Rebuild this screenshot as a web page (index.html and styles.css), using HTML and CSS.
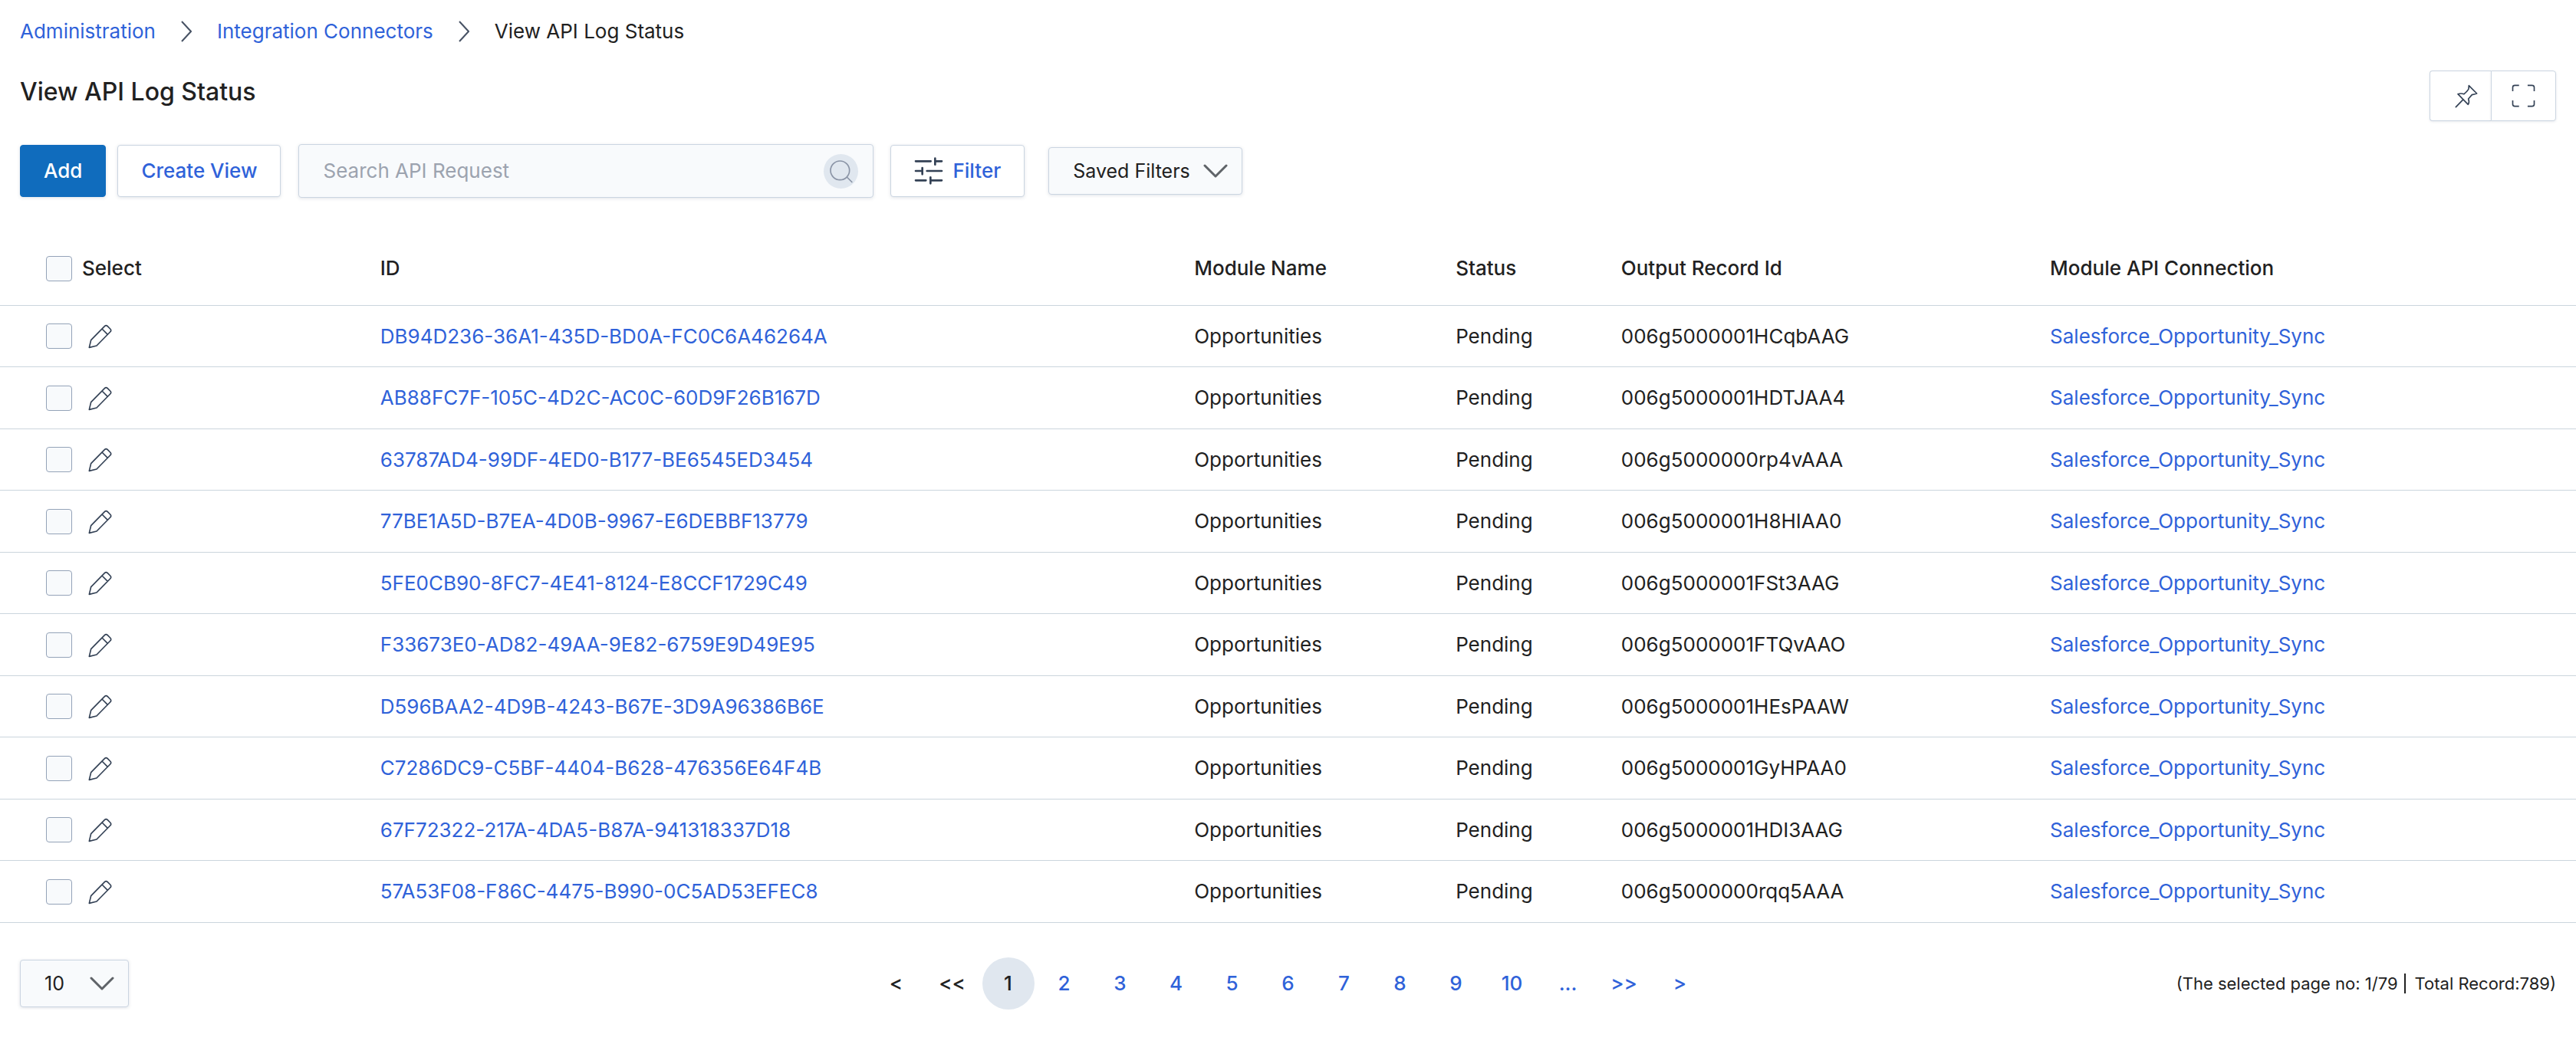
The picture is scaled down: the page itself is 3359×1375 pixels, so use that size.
FILE: index.html
```html
<!DOCTYPE html>
<html lang="en">
<head>
<meta charset="utf-8">
<title>View API Log Status</title>
<link rel="stylesheet" href="styles.css">
</head>
<body>
<svg class="sprite" aria-hidden="true">
  <symbol id="chevron-right" viewBox="0 0 14 28"><path d="M1 1L13 14L1 27" fill="none" stroke="#475264" stroke-width="2"/></symbol>
  <symbol id="chevron-down" viewBox="0 0 32 18"><path d="M2 2L16 16L30 2" fill="none" stroke="#5f6368" stroke-width="3" stroke-linecap="round" stroke-linejoin="round"/></symbol>
  <symbol id="pencil" viewBox="222 34 99 99"><path d="M229 128L236 99L289 45Q295 39 301 45L311 55Q317 61 311 67L258 121ZM279 55L301 77" fill="none" stroke="#334155" stroke-width="5" stroke-linejoin="round"/></symbol>
</svg>

<nav class="breadcrumb" aria-label="Breadcrumb">
  <a href="#">Administration</a>
  <svg class="crumb-sep"><use href="#chevron-right"/></svg>
  <a href="#">Integration Connectors</a>
  <svg class="crumb-sep"><use href="#chevron-right"/></svg>
  <span>View API Log Status</span>
</nav>

<header class="page-head">
  <h1>View API Log Status</h1>
  <div class="head-actions">
    <button type="button" class="pin" aria-label="Pin">
      <svg viewBox="240 113 90 93" width="30" height="31"><path d="M244 202L271 174M252 151Q264 147 276 151Q290 139 294 131L295 118L326 149Q314 152 307 154L293 170Q298 182 292 192Z" fill="none" stroke="#334155" stroke-width="5" stroke-linejoin="round" stroke-linecap="round"/></svg>
    </button>
    <button type="button" aria-label="Full screen">
      <svg viewBox="466 120 93 91" width="31" height="30"><path d="M470 147V132Q470 124 478 124H495M529 124H547Q555 124 555 132V147M555 184V199Q555 207 547 207H529M495 207H478Q470 207 470 199V184" fill="none" stroke="#334155" stroke-width="5"/></svg>
    </button>
  </div>
</header>

<div class="toolbar">
  <button type="button" class="btn btn-primary">Add</button>
  <button type="button" class="btn">Create View</button>
  <form class="search">
    <input type="search" placeholder="Search API Request" aria-label="Search API Request">
    <button type="submit" aria-label="Search">
      <svg viewBox="42 62 135 135" width="45" height="45"><path d="M133 152L154 173M143 126A37 37 0 1 1 69 126A37 37 0 1 1 143 126" fill="none" stroke="#8a94a6" stroke-width="5"/></svg>
    </button>
  </form>
  <button type="button" class="btn btn-filter">
    <svg viewBox="393 72 114 114" width="38" height="38"><path d="M399 91H458M475 91H501M475 80V104M399 129H425M425 117V142M443 129H501M399 166H439M457 166H501M457 154V178" fill="none" stroke="#334155" stroke-width="8" stroke-linecap="round"/></svg>
    Filter
  </button>
  <div class="dropdown saved">
    <select aria-label="Saved Filters"><option>Saved Filters</option></select>
    <svg><use href="#chevron-down"/></svg>
  </div>
</div>

<table class="log">
  <colgroup><col class="c-select"><col class="c-id"><col class="c-module"><col class="c-status"><col class="c-record"><col></colgroup>
  <thead>
    <tr>
      <th scope="col"><label class="pick"><input type="checkbox">Select</label></th>
      <th scope="col">ID</th><th scope="col">Module Name</th><th scope="col">Status</th><th scope="col">Output Record Id</th><th scope="col">Module API Connection</th>
    </tr>
  </thead>
  <tbody id="rows"></tbody>
</table>

<footer class="pager">
  <div class="dropdown size">
    <select aria-label="Records per page"><option>10</option></select>
    <svg><use href="#chevron-down"/></svg>
  </div>
  <nav class="pages" aria-label="Pages">
    <span>&lt;</span><span>&lt;&lt;</span><span class="current" aria-current="page">1</span>
    <a href="#">2</a><a href="#">3</a><a href="#">4</a><a href="#">5</a><a href="#">6</a><a href="#">7</a><a href="#">8</a><a href="#">9</a><a href="#">10</a><a href="#">...</a><a href="#">&gt;&gt;</a><a href="#">&gt;</a>
  </nav>
  <p class="summary"><span>(The selected page no: 1/79</span><span class="total">Total Record:789)</span></p>
</footer>
<script src="rows.js"></script>
</body>
</html>
```
FILE: styles.css
```css
* { box-sizing: border-box; }

body {
  margin: 0;
  font: 400 26px/32px Inter, "Liberation Sans", sans-serif;
  color: #212121;
  background: #fff;
}

a { color: #2f62d9; text-decoration: none; }

svg { display: block; flex: none; }

.sprite { position: absolute; width: 0; height: 0; }

button, input, select { font: inherit; color: inherit; margin: 0; }

.breadcrumb {
  display: flex;
  align-items: center;
  gap: 33px;
  padding: 25px 26px 0;
}

.crumb-sep { width: 14px; height: 28px; }

.page-head {
  display: flex;
  justify-content: space-between;
  align-items: flex-start;
  padding: 35px 26px 0;
}

h1 {
  margin: 0;
  padding-top: 8px;
  font-size: 32px;
  font-weight: 500;
  line-height: 40px;
}

.head-actions { display: flex; }

.head-actions button {
  display: flex;
  align-items: center;
  justify-content: center;
  width: 85px;
  height: 66px;
  padding: 0;
  border: 1px solid #cbd5e1;
  border-radius: 0 4px 4px 0;
  background: #fff;
  box-shadow: 0 1px 3px rgba(100, 116, 139, .15);
}

.head-actions .pin {
  width: 80px;
  padding-left: 14px;
  border-right: 0;
  border-radius: 4px 0 0 4px;
}

.toolbar {
  display: flex;
  align-items: center;
  padding: 30px 26px 0;
}

.btn {
  display: flex;
  align-items: center;
  justify-content: center;
  height: 68px;
  margin-right: 15px;
  padding: 0 30px;
  border: 1px solid #cbd5e1;
  border-radius: 4px;
  background: #fff;
  color: #2f62d9;
  font-weight: 500;
  box-shadow: 0 1px 4px rgba(100, 116, 139, .2);
}

.btn-primary {
  border-color: #106cbd;
  background: #106cbd;
  color: #fff;
}

.search {
  display: flex;
  align-items: center;
  justify-content: space-between;
  width: 750px;
  height: 70px;
  margin: 0 22px 0 8px;
  padding: 0 19px 0 31px;
  border: 1px solid #cbd5e1;
  border-radius: 4px;
  background: #f8fafc;
  box-shadow: 0 1px 4px rgba(100, 116, 139, .2);
}

.search input {
  flex: 1;
  padding: 0;
  border: 0;
  outline: 0;
  background: none;
}

.search input::placeholder { color: #9ca3af; }

.search button {
  padding: 0;
  border: 0;
  border-radius: 50%;
  background: #e0e7ef;
}

.btn-filter { gap: 12px; margin-right: 31px; }

.dropdown {
  display: grid;
  align-items: center;
  height: 62px;
}

.dropdown select, .dropdown svg { grid-area: 1 / 1; }

.dropdown select {
  width: 100%;
  height: 62px;
  appearance: none;
  padding: 0 31px;
  border: 1px solid #cbd5e1;
  border-radius: 4px;
  background: #f8fafc;
  box-shadow: 0 1px 4px rgba(100, 116, 139, .2);
}

.dropdown svg {
  justify-self: end;
  width: 32px;
  height: 18px;
  margin-right: 19px;
  pointer-events: none;
}

.saved { width: 253px; }
.saved select { font-size: 25px; }
.size { width: 142px; }
.size select { font-size: 25px; }

.log {
  width: 100%;
  margin-top: 44px;
  border-collapse: separate;
  border-spacing: 0;
  table-layout: fixed;
}

.c-select { width: 14.76%; }
.c-id { width: 31.6%; }
.c-module { width: 10.15%; }
.c-status { width: 6.42%; }
.c-record { width: 16.65%; }

.log th, .log td {
  padding: 0;
  border-bottom: 1px solid #cbd5dd;
  text-align: left;
  vertical-align: middle;
  white-space: nowrap;
}

.log th { height: 97px; font-weight: 500; }
.log td { height: 80px; }
.log tbody tr:nth-child(even) td { height: 81px; }

.pick {
  display: flex;
  align-items: center;
  gap: 13px;
  padding-left: 60px;
}

.log td .pick { gap: 20px; }

.pick input {
  appearance: none;
  width: 34px;
  height: 33px;
  border: 1px solid #94a3b8;
  border-radius: 4px;
  background: #f8fafc;
}

.edit { padding: 0; border: 0; background: none; }
.edit svg { width: 33px; height: 33px; }

.pager {
  display: grid;
  grid-template-columns: 1fr auto 1fr;
  align-items: center;
  padding: 45px 26px 0;
}

.pages { display: flex; gap: 5px; }

.pages a, .pages span {
  width: 68px;
  height: 68px;
  border-radius: 50%;
  line-height: 68px;
  text-align: center;
  font-weight: 500;
}

.pages .current { background: #e0e7ef; }

.summary {
  display: flex;
  align-items: center;
  justify-content: flex-end;
  margin: 0;
  font-size: 22px;
}

.total {
  margin-left: 8px;
  padding-left: 12px;
  border-left: 2px solid #212121;
  line-height: 26px;
}
```
FILE: rows.js
```js
const records = [
  ["DB94D236-36A1-435D-BD0A-FC0C6A46264A", "006g5000001HCqbAAG"],
  ["AB88FC7F-105C-4D2C-AC0C-60D9F26B167D", "006g5000001HDTJAA4"],
  ["63787AD4-99DF-4ED0-B177-BE6545ED3454", "006g5000000rp4vAAA"],
  ["77BE1A5D-B7EA-4D0B-9967-E6DEBBF13779", "006g5000001H8HIAA0"],
  ["5FE0CB90-8FC7-4E41-8124-E8CCF1729C49", "006g5000001FSt3AAG"],
  ["F33673E0-AD82-49AA-9E82-6759E9D49E95", "006g5000001FTQvAAO"],
  ["D596BAA2-4D9B-4243-B67E-3D9A96386B6E", "006g5000001HEsPAAW"],
  ["C7286DC9-C5BF-4404-B628-476356E64F4B", "006g5000001GyHPAA0"],
  ["67F72322-217A-4DA5-B87A-941318337D18", "006g5000001HDI3AAG"],
  ["57A53F08-F86C-4475-B990-0C5AD53EFEC8", "006g5000000rqq5AAA"]
];

document.getElementById("rows").innerHTML = records.map(([id, record]) => `
  <tr>
    <td><div class="pick"><input type="checkbox" aria-label="Select ${id}"><button type="button" class="edit" aria-label="Edit ${id}"><svg><use href="#pencil"/></svg></button></div></td>
    <td><a href="#">${id}</a></td>
    <td>Opportunities</td>
    <td>Pending</td>
    <td>${record}</td>
    <td><a href="#">Salesforce_Opportunity_Sync</a></td>
  </tr>`).join("");
```
